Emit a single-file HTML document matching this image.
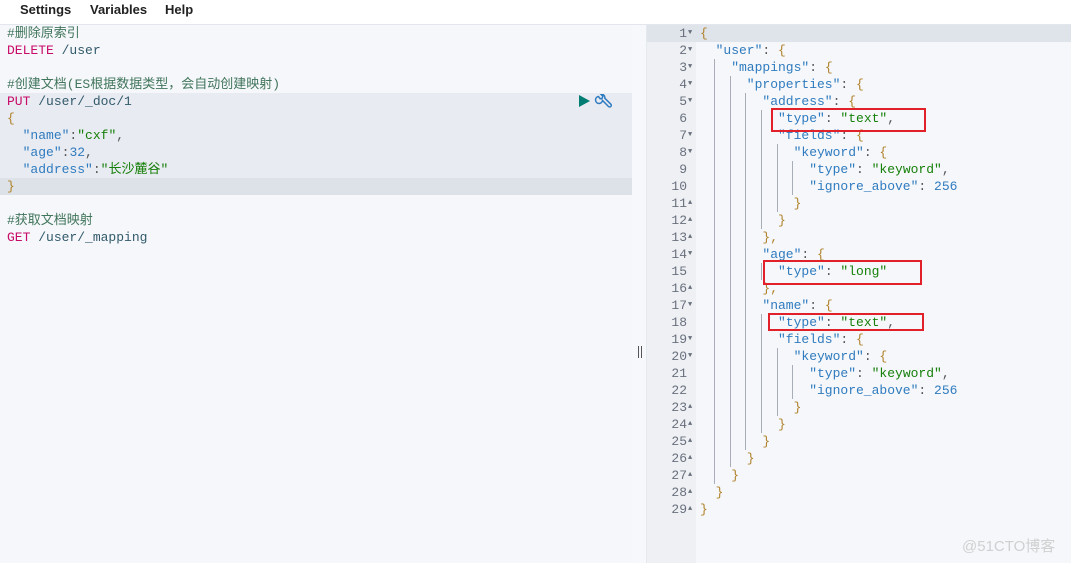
<!DOCTYPE html>
<html><head><meta charset="utf-8"><style>
*{margin:0;padding:0;box-sizing:border-box}
body{width:1071px;height:563px;overflow:hidden;background:#f5f7fa;font-family:"Liberation Mono","Noto Sans CJK SC",monospace;font-size:13px;position:relative}
.menu{position:absolute;left:0;top:0;width:1071px;height:25px;background:#fff;border-bottom:1px solid #e3e6ec;font-family:"Liberation Sans",sans-serif;font-weight:bold;font-size:13px;color:#222}
.menu span{position:absolute;top:2px}
.left{position:absolute;left:0;top:25px;width:632px;height:538px;background:#f5f7fa}
.div{position:absolute;left:632px;top:25px;width:15px;height:538px;background:#f7f8fb;border-right:1px solid #e6e9ee}
.gut{position:absolute;left:647px;top:25px;width:49px;height:538px;background:#eef0f4}
.right{position:absolute;left:696px;top:25px;width:375px;height:538px;background:#f5f7fa}
.l{position:absolute;height:17px;line-height:17px;white-space:pre}
.c{color:#41755c}.m{color:#c80a68}.p{color:#325a6b}.k{color:#2f7bbf}.s{color:#17800b}.n{color:#2f7bbf}.b{color:#b0822b}.g{color:#555}
.ln{position:absolute;left:647px;width:40px;text-align:right;color:#69707d;height:17px;line-height:17px}
.ar{position:absolute;left:688px;font-size:7px;color:#69707d;line-height:17px}
.guide{position:absolute;width:1px;background:#a8adb8}
.box{position:absolute;border:2px solid #e2202a}
</style></head><body>
<div class="menu"><span style="left:20px">Settings</span><span style="left:90px">Variables</span><span style="left:165px">Help</span></div>
<div class="left"></div>
<div style="position:absolute;left:0;top:93px;width:632px;height:85px;background:#e8ebf1"></div>
<div style="position:absolute;left:0;top:178px;width:632px;height:17px;background:#dde1e8"></div>
<div class="div"><div style="position:absolute;left:6px;top:321px;width:1px;height:12px;background:#555"></div><div style="position:absolute;left:9px;top:321px;width:1px;height:12px;background:#555"></div></div>
<div class="gut"></div><div class="right"></div>
<div style="position:absolute;left:647px;top:25px;width:424px;height:17px;background:#dfe3ea"></div>

<div class="l c" style="left:7px;top:25px">#删除原索引</div>
<div class="l" style="left:7px;top:42px"><span class="m">DELETE</span> <span class="p">/user</span></div>
<div class="l c" style="left:7px;top:76px">#创建文档(ES根据数据类型，会自动创建映射)</div>
<div class="l" style="left:7px;top:93px"><span class="m">PUT</span> <span class="p">/user/_doc/1</span></div>
<div class="l b" style="left:7px;top:110px">{</div>
<div class="l" style="left:7px;top:127px">  <span class="k">"name"</span><span class="g">:</span><span class="s">"cxf"</span><span class="g">,</span></div>
<div class="l" style="left:7px;top:144px">  <span class="k">"age"</span><span class="g">:</span><span class="n">32</span><span class="g">,</span></div>
<div class="l" style="left:7px;top:161px">  <span class="k">"address"</span><span class="g">:</span><span class="s">"长沙麓谷"</span></div>
<div class="l b" style="left:7px;top:178px">}</div>
<div class="l c" style="left:7px;top:212px">#获取文档映射</div>
<div class="l" style="left:7px;top:229px"><span class="m">GET</span> <span class="p">/user/_mapping</span></div>
<svg style="position:absolute;left:578px;top:94px" width="36" height="16"><polygon points="1,1 12,7 1,13" fill="#017d73"/><g fill="none" stroke="#2f7bbf" stroke-width="1.5"><path d="M20.5 2.5 a3.5 3.5 0 1 0 4 4 l6 6 a1.6 1.6 0 0 0 2.3 -2.3 l-6 -6 a3.5 3.5 0 0 0 -4 -4 l2 2 -0.6 2 -2 0.6z"/></g></svg>

<div id="R"></div>
<div class="box" style="left:771px;top:108px;width:155px;height:24px"></div>
<div class="box" style="left:763px;top:260px;width:159px;height:25px"></div>
<div class="box" style="left:768px;top:313px;width:156px;height:18px"></div>
<div style="position:absolute;left:962px;top:535px;font-family:'Liberation Sans','Noto Sans CJK SC',sans-serif;font-size:15px;color:#d0d0d0">@51CTO博客</div>
<script>
var L=[
[0,'<span class="b">{</span>','v'],
[1,'<span class="k">"user"</span><span class="g">: </span><span class="b">{</span>','v'],
[2,'<span class="k">"mappings"</span><span class="g">: </span><span class="b">{</span>','v'],
[3,'<span class="k">"properties"</span><span class="g">: </span><span class="b">{</span>','v'],
[4,'<span class="k">"address"</span><span class="g">: </span><span class="b">{</span>','v'],
[5,'<span class="k">"type"</span><span class="g">: </span><span class="s">"text"</span><span class="g">,</span>',''],
[5,'<span class="k">"fields"</span><span class="g">: </span><span class="b">{</span>','v'],
[6,'<span class="k">"keyword"</span><span class="g">: </span><span class="b">{</span>','v'],
[7,'<span class="k">"type"</span><span class="g">: </span><span class="s">"keyword"</span><span class="g">,</span>',''],
[7,'<span class="k">"ignore_above"</span><span class="g">: </span><span class="n">256</span>',''],
[6,'<span class="b">}</span>','^'],
[5,'<span class="b">}</span>','^'],
[4,'<span class="b">},</span>','^'],
[4,'<span class="k">"age"</span><span class="g">: </span><span class="b">{</span>','v'],
[5,'<span class="k">"type"</span><span class="g">: </span><span class="s">"long"</span>',''],
[4,'<span class="b">},</span>','^'],
[4,'<span class="k">"name"</span><span class="g">: </span><span class="b">{</span>','v'],
[5,'<span class="k">"type"</span><span class="g">: </span><span class="s">"text"</span><span class="g">,</span>',''],
[5,'<span class="k">"fields"</span><span class="g">: </span><span class="b">{</span>','v'],
[6,'<span class="k">"keyword"</span><span class="g">: </span><span class="b">{</span>','v'],
[7,'<span class="k">"type"</span><span class="g">: </span><span class="s">"keyword"</span><span class="g">,</span>',''],
[7,'<span class="k">"ignore_above"</span><span class="g">: </span><span class="n">256</span>',''],
[6,'<span class="b">}</span>','^'],
[5,'<span class="b">}</span>','^'],
[4,'<span class="b">}</span>','^'],
[3,'<span class="b">}</span>','^'],
[2,'<span class="b">}</span>','^'],
[1,'<span class="b">}</span>','^'],
[0,'<span class="b">}</span>','^']];
var h='',cw=7.8;
L.forEach(function(r,i){var t=25+17*i;
h+='<div class="ln" style="top:'+t+'px">'+(i+1)+'</div>';
if(r[2])h+='<div class="ar" style="top:'+t+'px">'+(r[2]=='v'?'▼':'▲')+'</div>';
for(var j=1;j<r[0];j++){h+='<div class="guide" style="left:'+Math.round(700+j*2*cw-1.5)+'px;top:'+t+'px;height:17px"></div>';}
h+='<div class="l" style="left:'+(700+r[0]*2*cw)+'px;top:'+t+'px">'+r[1]+'</div>';
});
document.getElementById('R').innerHTML=h;
</script>
</body></html>
